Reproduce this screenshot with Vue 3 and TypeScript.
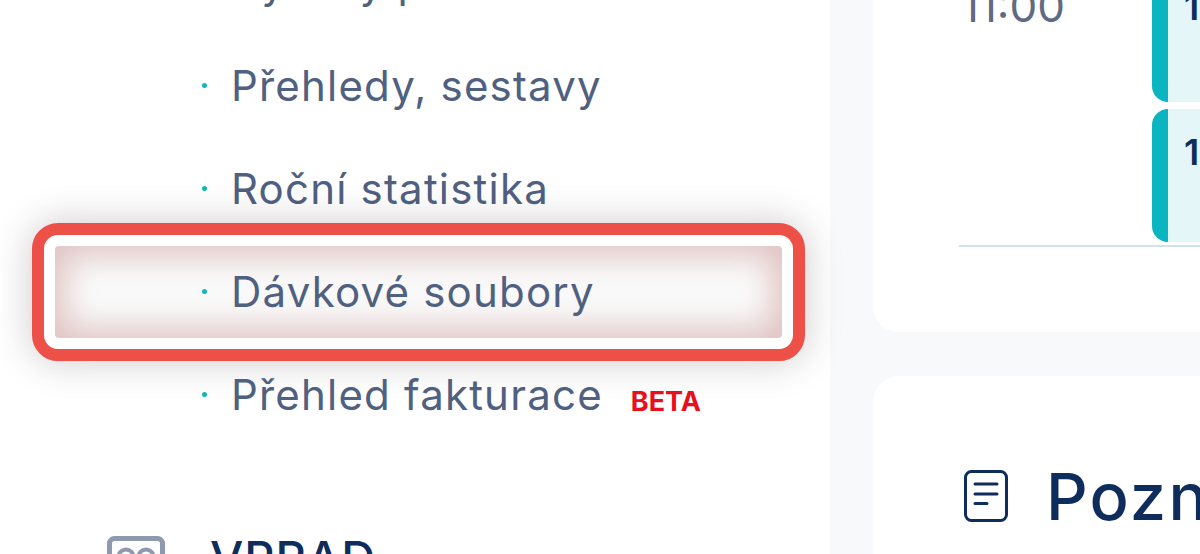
<script setup lang="ts">
const items = [
  { label: 'Výkazy péče', beta: false, mark: false },
  { label: 'Přehledy, sestavy', beta: false, mark: false },
  { label: 'Roční statistika', beta: false, mark: false },
  { label: 'Dávkové soubory', beta: false, mark: true },
  { label: 'Přehled fakturace', beta: true, mark: false },
]
</script>

<template>
  <div class="page">
    <aside class="sidebar">
      <ul class="menu">
        <li v-for="item in items" :key="item.label" class="row">
          <div v-if="item.mark" class="mark"><div class="mark-inner"></div></div>
          <span class="dot"></span>
          <span class="label">{{ item.label }}</span>
          <span v-if="item.beta" class="beta">BETA</span>
        </li>
      </ul>
      <div class="section">
        <svg class="section-icon" viewBox="0 0 58 40" fill="none" stroke="#8d99ad" stroke-width="5">
          <rect x="2.500" y="2.500" width="53" height="40" rx="5" />
          <circle cx="19" cy="21" r="7.500" stroke-width="4" />
          <circle cx="39" cy="21" r="7.500" stroke-width="4" />
        </svg>
        <span class="section-title">VPRAD</span>
      </div>
    </aside>
    <main class="content">
      <section class="card schedule">
        <div class="time">11:00</div>
        <div class="events">
          <div class="event first"><span>1</span></div>
          <div class="event second"><span>1</span></div>
        </div>
      </section>
      <section class="card notes">
        <svg class="note-icon" viewBox="0 0 44 52" fill="none" stroke="#0f2d5c" stroke-width="3" stroke-linecap="round">
          <rect x="1.500" y="1.500" width="41" height="49" rx="6" />
          <path d="M11 14H33M11 24H33M11 33.500H23" />
        </svg>
        <h2 class="notes-title">Poznámky</h2>
      </section>
    </main>
  </div>
</template>

<style>
html, body { margin: 0; background: #f8f9fb; }
</style>

<style scoped>
.page {
  display: flex;
  width: 1200px;
  height: 554px;
  overflow: hidden;
  background: #f8f9fb;
  font-family: Inter, "Liberation Sans", sans-serif;
}
.sidebar {
  flex: 0 0 830px;
  height: 554px;
  background: #fff;
}
.menu {
  list-style: none;
  margin: -69px 0 0;
  padding: 0;
}
.row {
  position: relative;
  display: flex;
  align-items: center;
  height: 103px;
  padding-left: 202px;
  color: #4f6080;
}
.mark {
  position: absolute;
  left: 32px;
  top: -17px;
  box-sizing: border-box;
  width: 773px;
  height: 138px;
  padding: 11px;
  border: 12px solid #ec5046;
  border-radius: 26px;
  background: #fff;
  box-shadow: 0 0 36px rgba(70, 50, 50, 0.27);
}
.mark-inner {
  height: 100%;
  border-radius: 4px;
  background: #fafafa;
  box-shadow: inset 0 0 32px 10px rgba(170, 90, 85, 0.34);
}
.dot {
  position: relative;
  width: 5px;
  height: 5px;
  margin-right: 24px;
  border-radius: 50%;
  background: #10b5c0;
}
.label {
  position: relative;
  font-size: 42px;
  letter-spacing: 1.200px;
  line-height: 1;
}
.beta {
  margin: 14px 0 0 28px;
  color: #e8101c;
  font-size: 27px;
  font-weight: 700;
}
.section {
  display: flex;
  align-items: flex-start;
  gap: 45px;
  margin: 84px 0 0 107px;
}
.section-icon {
  flex: none;
  width: 58px;
  height: 40px;
  margin-top: 6px;
}
.section-title {
  color: #0f2d5c;
  font-size: 47px;
  font-weight: 500;
  letter-spacing: 1px;
  line-height: 56px;
}
.content {
  flex: 1;
  display: flex;
  flex-direction: column;
  gap: 44px;
  padding-left: 43px;
}
.card {
  background: #fff;
}
.schedule {
  position: relative;
  display: flex;
  flex: 0 0 332px;
  box-sizing: border-box;
  padding: 0 0 0 88px;
  border-radius: 0 0 0 26px;
}
.schedule::after {
  content: "";
  position: absolute;
  left: 86px;
  right: 0;
  top: 245px;
  height: 2px;
  background: #cfe3e8;
}
.time {
  width: 191px;
  margin-top: -19px;
  color: #5e6b82;
  font-size: 44px;
  line-height: 50px;
}
.events {
  flex: 1;
  display: flex;
  flex-direction: column;
  gap: 7px;
}
.event {
  box-sizing: border-box;
  border-left: 16px solid #08b5c0;
  border-radius: 16px 0 0 16px;
  background: #e4f6f7;
  padding-left: 16px;
  color: #0f2d5c;
  font-size: 36px;
  font-weight: 600;
}
.first {
  height: 102px;
  border-top-left-radius: 0;
  line-height: 32px;
}
.first span { display: block; margin-top: -9px; }
.second {
  height: 133px;
  padding-top: 22px;
  line-height: 42px;
}
.notes {
  flex: 1;
  display: flex;
  align-items: flex-start;
  gap: 38px;
  padding: 94px 0 0 91px;
  border-radius: 26px 0 0 0;
  white-space: nowrap;
}
.note-icon {
  flex: none;
  width: 44px;
  height: 52px;
}
.notes-title {
  margin: -3px 0 0;
  color: #0f2d5c;
  font-size: 65px;
  font-weight: 500;
  letter-spacing: 2.200px;
  line-height: 60px;
}
</style>
